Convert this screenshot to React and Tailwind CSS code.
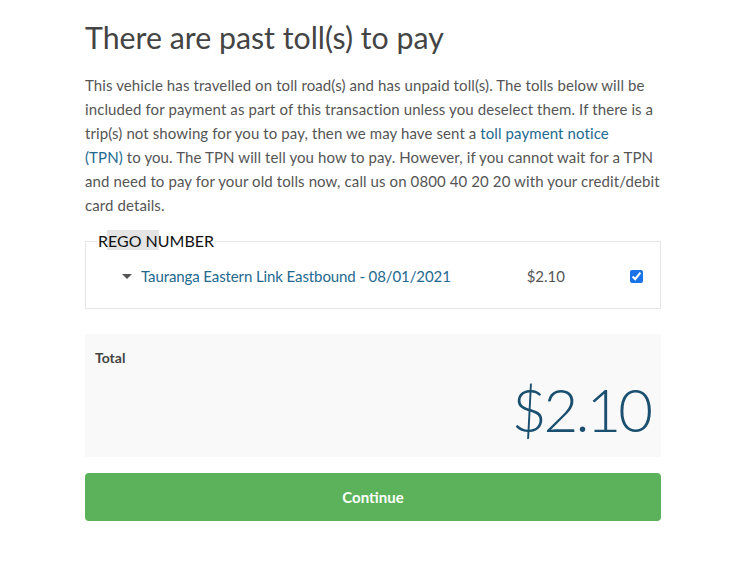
export default function App() {
  return (
    <div className="min-h-screen bg-white" style={{ fontFamily: 'Lato, "Open Sans", sans-serif' }}>
      <div className="w-[576px] ml-[85px] pt-[17px]">
        <h1 className="text-[30.3px] leading-[40px] text-[#444]">There are past toll(s) to pay</h1>

        <p className="mt-[16px] whitespace-nowrap text-[15px] leading-[24px] tracking-[0.1px] text-[#555]">
          This vehicle has travelled on toll road(s) and has unpaid toll(s). The tolls below will be
          <br />
          included for payment as part of this transaction unless you deselect them. If there is a
          <br />
          trip(s) not showing for you to pay, then we may have sent a{' '}
          <a className="text-[#23698f]">
            toll payment notice
            <br />
            (TPN)
          </a>{' '}
          to you. The TPN will tell you how to pay. However, if you cannot wait for a TPN
          <br />
          and need to pay for your old tolls now, call us on 0800 40 20 20 with your credit/debit
          <br />
          card details.
        </p>

        {/* Rego fieldset */}
        <fieldset className="mt-[15px] border border-[#e6e6e6] px-[11px] pb-[22px]">
          <legend className="relative px-[1px] text-[16px] leading-[18px] text-[#111]">
            <span className="absolute left-[10px] top-[-2px] h-[20px] w-[52px] bg-[#e4e4e4]" />
            <span className="relative">REGO NUMBER</span>
          </legend>
          <div className="flex items-center pt-[16px] text-[15px] leading-[20px]">
            <span className="ml-[25px] mr-[9px] h-0 w-0 border-x-[5px] border-t-[5px] border-x-transparent border-t-[#555]" />
            <a className="tracking-[-0.1px] text-[#23698f]">Tauranga Eastern Link Eastbound - 08/01/2021</a>
            <span className="ml-auto text-[#555]">$2.10</span>
            <input type="checkbox" defaultChecked className="ml-[65px] mr-[6px] h-[13px] w-[13px] accent-[#1a73e8]" />
          </div>
        </fieldset>

        {/* Total */}
        <div className="mt-[25px] h-[123px] bg-[#f9f9f9] px-[10px] pt-[14px]">
          <div className="text-[14px] font-bold leading-[20px] text-[#444]">Total</div>
          <div className="mt-[8px] pr-[1px] text-right text-[60px] font-light leading-[66px] tracking-[-3px] text-[#1a4f70]">
            $2.10
          </div>
        </div>

        <button className="mt-[16px] h-[48px] w-full rounded-[4px] bg-[#5cb25a] text-[15px] font-bold text-white">
          Continue
        </button>
      </div>
    </div>
  )
}
